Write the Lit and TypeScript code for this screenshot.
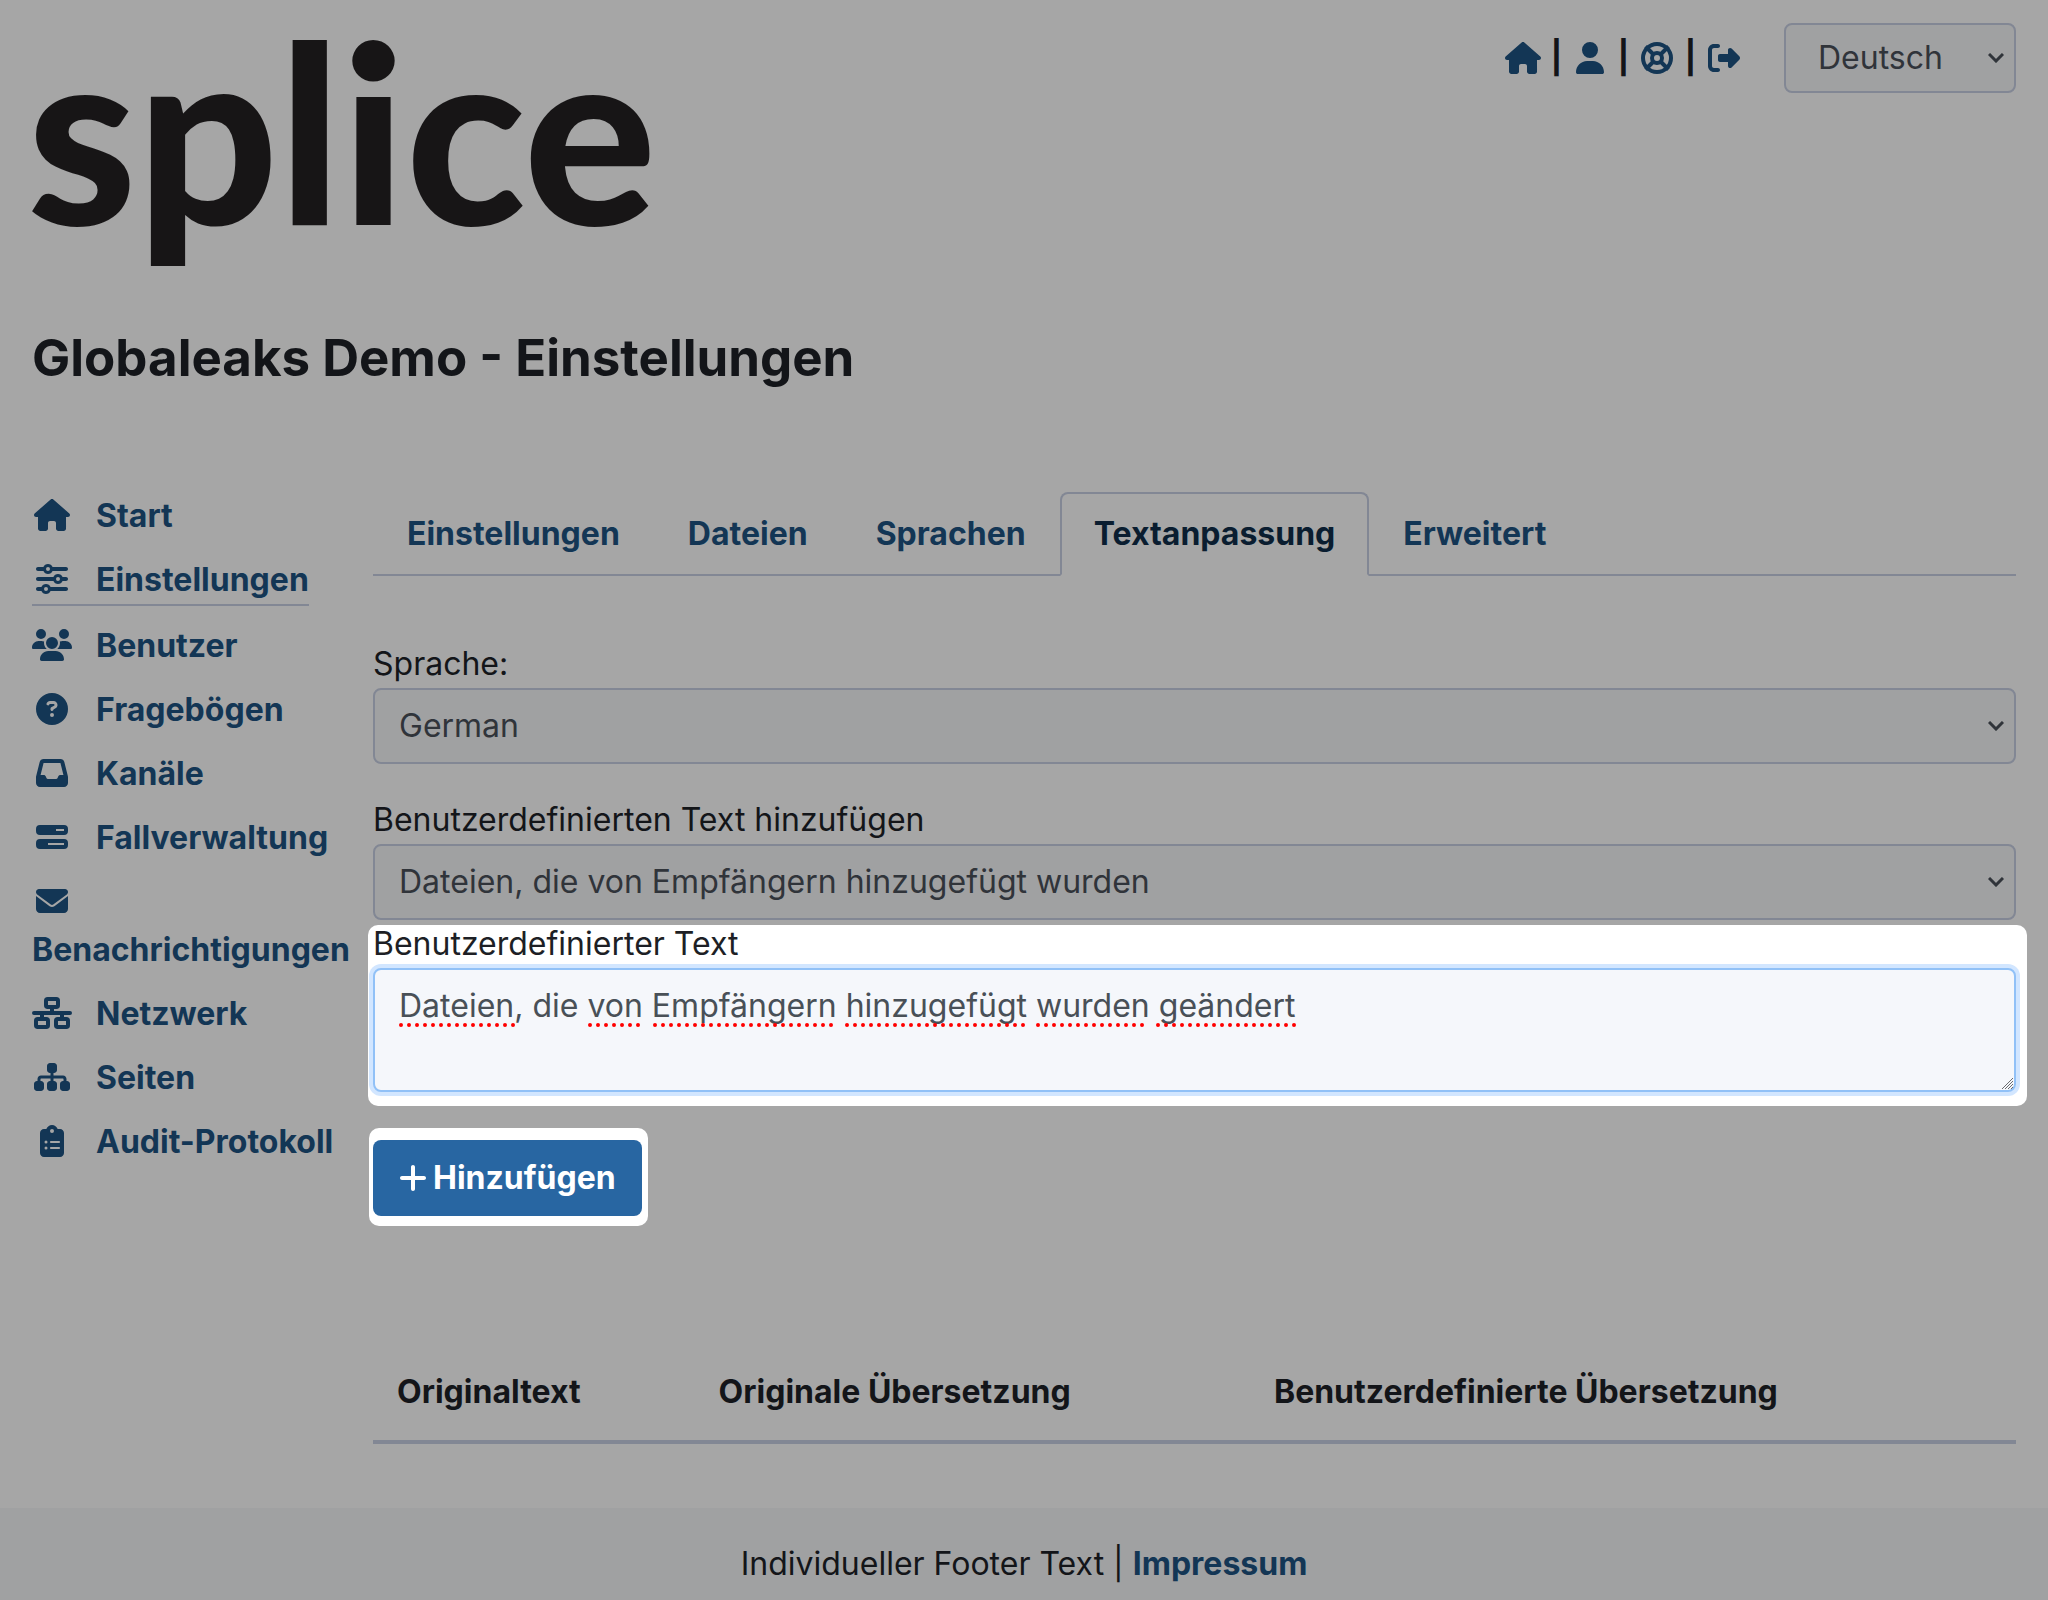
import { LitElement, html, css, svg } from "lit";
import { customElement } from "lit/decorators.js";
import { classMap } from "lit/directives/class-map.js";

interface Icon {
  w: number;
  d: string;
}

const box = (x: number, y: number, w: number, h: number, r: number) =>
  `M${x + r} ${y}h${w - 2 * r}a${r} ${r} 0 0 1 ${r} ${r}v${h - 2 * r}a${r} ${r} 0 0 1 -${r} ${r}h-${w - 2 * r}a${r} ${r} 0 0 1 -${r} -${r}v-${h - 2 * r}a${r} ${r} 0 0 1 ${r} -${r}z`;
const hole = (x: number, y: number, w: number, h: number) => `M${x} ${y}v${h}h${w}v-${h}z`;

const icons: Record<string, Icon> = {
  home: { w: 576, d: "M575.8 255.5c0 18-15 32.1-32 32.1l-32 0 .7 160.2c0 2.7-.2 5.4-.5 8.1l0 16.2c0 22.1-17.9 40-40 40l-16 0c-1.1 0-2.2 0-3.3-.1c-1.4 .1-2.8 .1-4.2 .1L416 512l-24 0c-22.1 0-40-17.9-40-40l0-24 0-64c0-17.7-14.3-32-32-32l-64 0c-17.7 0-32 14.3-32 32l0 64 0 24c0 22.1-17.9 40-40 40l-24 0-31.9 0c-1.5 0-3-.1-4.5-.2c-1.2 .1-2.4 .2-3.6 .2l-16 0c-22.1 0-40-17.9-40-40l0-112c0-.9 0-1.9 .1-2.8l0-69.7-32 0c-18 0-32-14-32-32.1c0-9 3-17 10-24L266.4 8c7-7 15-8 22-8s15 2 21 7L564.8 231.5c8 7 12 15 11 24z" },
  user: { w: 448, d: "M224 256A128 128 0 1 0 224 0a128 128 0 1 0 0 256zm-45.7 48C79.8 304 0 383.8 0 482.3C0 498.7 13.3 512 29.7 512l388.6 0c16.4 0 29.7-13.3 29.7-29.7C448 383.8 368.2 304 269.7 304l-91.4 0z" },
  exit: { w: 512, d: "M377.9 105.9L500.7 228.7c7.2 7.2 11.3 17.1 11.3 27.3s-4.1 20.1-11.3 27.3L377.9 406.1c-6.4 6.4-15 9.900-24 9.900c-18.700 0-33.900-15.200-33.900-33.900l0-62.100-128 0c-17.700 0-32-14.300-32-32l0-64c0-17.700 14.300-32 32-32l128 0 0-62.100c0-18.700 15.200-33.900 33.900-33.900c9 0 17.600 3.600 24 9.900zM160 96L96 96c-17.700 0-32 14.300-32 32l0 256c0 17.700 14.300 32 32 32l64 0c17.700 0 32 14.300 32 32s-14.300 32-32 32l-64 0c-53 0-96-43-96-96L0 128C0 75 43 32 96 32l64 0c17.700 0 32 14.300 32 32s-14.300 32-32 32z" },
  sliders: { w: 512, d: "M0 416c0 17.700 14.300 32 32 32l54.700 0c12.300 28.300 40.500 48 73.300 48s61-19.700 73.300-48L480 448c17.700 0 32-14.300 32-32s-14.300-32-32-32l-246.700 0c-12.300-28.300-40.500-48-73.300-48s-61 19.700-73.300 48L32 384c-17.700 0-32 14.300-32 32zm128 0a32 32 0 1 1 64 0 32 32 0 1 1 -64 0zM320 256a32 32 0 1 1 64 0 32 32 0 1 1 -64 0zm32-80c-32.800 0-61 19.700-73.300 48L32 224c-17.700 0-32 14.300-32 32s14.300 32 32 32l246.700 0c12.300 28.300 40.500 48 73.300 48s61-19.700 73.300-48l54.700 0c17.700 0 32-14.300 32-32s-14.300-32-32-32l-54.700 0c-12.300-28.300-40.500-48-73.300-48zM192 128a32 32 0 1 1 0-64 32 32 0 1 1 0 64zm73.300-64C253 35.700 224.800 16 192 16s-61 19.700-73.300 48L32 64C14.300 64 0 78.300 0 96s14.300 32 32 32l86.700 0c12.300 28.300 40.500 48 73.300 48s61-19.700 73.300-48L480 128c17.700 0 32-14.300 32-32s-14.300-32-32-32L265.300 64z" },
  users: { w: 640, d: "M144 0a80 80 0 1 1 0 160A80 80 0 1 1 144 0zM512 0a80 80 0 1 1 0 160A80 80 0 1 1 512 0zM0 298.700C0 239.800 47.800 192 106.700 192l42.700 0c15.900 0 31 3.500 44.600 9.700c-1.300 7.200-1.900 14.700-1.900 22.300c0 38.200 16.800 72.500 43.300 96c-.2 0-.4 0-.7 0L21.300 320C9.600 320 0 310.400 0 298.700zM405.300 320c-.2 0-.4 0-.7 0c26.600-23.500 43.300-57.800 43.300-96c0-7.600-.7-15-1.900-22.300c13.600-6.300 28.700-9.700 44.600-9.700l42.700 0C592.200 192 640 239.800 640 298.700c0 11.800-9.600 21.300-21.300 21.300l-213.300 0zM224 224a96 96 0 1 1 192 0 96 96 0 1 1 -192 0zM128 485.300C128 411.700 187.700 352 261.300 352l117.300 0C452.300 352 512 411.700 512 485.300c0 14.700-11.900 26.700-26.700 26.700l-330.700 0c-14.700 0-26.700-11.900-26.700-26.700z" },
  question: { w: 512, d: "M256 512A256 256 0 1 0 256 0a256 256 0 1 0 0 512zM169.800 165.300c7.900-22.300 29.100-37.300 52.800-37.300l58.300 0c34.900 0 63.100 28.300 63.100 63.100c0 22.600-12.100 43.500-31.700 54.800L280 264.400c-.2 13-10.900 23.600-24 23.600c-13.300 0-24-10.700-24-24l0-13.500c0-8.600 4.600-16.500 12.100-20.800l44.300-25.400c4.700-2.700 7.600-7.700 7.600-13.100c0-8.400-6.800-15.100-15.100-15.100l-58.300 0c-3.400 0-6.400 2.100-7.500 5.300l-.4 1.200c-4.400 12.500-18.200 19-30.600 14.600s-19-18.200-14.600-30.600l.4-1.200zM224 352a32 32 0 1 1 64 0 32 32 0 1 1 -64 0z" },
  inbox: { w: 512, d: "M121 32C91.600 32 66 52 58.900 80.500L1.900 308.400C.6 313.500 0 318.700 0 323.900L0 416c0 35.300 28.700 64 64 64l384 0c35.300 0 64-28.700 64-64l0-92.100c0-5.200-.6-10.400-1.900-15.500l-57-227.900C446 52 420.400 32 391 32L121 32zm0 64l270 0 48 192-51.200 0c-12.100 0-23.200 6.800-28.600 17.700l-14.300 28.600c-5.400 10.800-16.500 17.700-28.600 17.700l-120.400 0c-12.100 0-23.200-6.800-28.600-17.700l-14.300-28.600c-5.400-10.800-16.500-17.700-28.600-17.700L73 288 121 96z" },
  bars: { w: 512, d: box(0, 64, 512, 160, 64) + hole(320, 128, 128, 32) + box(0, 288, 512, 160, 64) + hole(192, 352, 256, 32) },
  mail: { w: 512, d: "M48 64C21.500 64 0 85.500 0 112c0 15.100 7.100 29.300 19.200 38.400L236.800 313.600c11.400 8.500 27 8.500 38.400 0L492.800 150.400c12.100-9.100 19.200-23.300 19.200-38.400c0-26.500-21.500-48-48-48L48 64zM0 176L0 384c0 35.300 28.700 64 64 64l384 0c35.300 0 64-28.700 64-64l0-208L294.400 339.200c-22.800 17.100-54 17.100-76.800 0L0 176z" },
  network: { w: 640, d: box(192, 0, 256, 192, 60) + hole(256, 64, 128, 64) + "M288 192h64v32h256a32 32 0 0 1 0 64h-96v32h-64v-32h-256v32h-64v-32h-96a32 32 0 0 1 0 -64h256z" + box(32, 320, 256, 192, 60) + hole(96, 384, 128, 64) + box(352, 320, 256, 192, 60) + hole(416, 384, 128, 64) },
  sitemap: { w: 576, d: "M208 80c0-26.500 21.500-48 48-48l64 0c26.500 0 48 21.500 48 48l0 64c0 26.500-21.500 48-48 48l-8 0 0 40 152 0c30.900 0 56 25.100 56 56l0 32 8 0c26.500 0 48 21.500 48 48l0 64c0 26.500-21.500 48-48 48l-64 0c-26.500 0-48-21.500-48-48l0-64c0-26.500 21.500-48 48-48l8 0 0-32c0-4.400-3.600-8-8-8l-152 0 0 40 8 0c26.500 0 48 21.500 48 48l0 64c0 26.500-21.500 48-48 48l-64 0c-26.500 0-48-21.500-48-48l0-64c0-26.500 21.500-48 48-48l8 0 0-40-152 0c-4.400 0-8 3.600-8 8l0 32 8 0c26.500 0 48 21.500 48 48l0 64c0 26.500-21.500 48-48 48l-64 0c-26.500 0-48-21.500-48-48l0-64c0-26.500 21.500-48 48-48l8 0 0-32c0-30.900 25.100-56 56-56l152 0 0-40-8 0c-26.500 0-48-21.500-48-48l0-64z" },
  clipboard: { w: 384, d: "M192 0c-41.800 0-77.400 26.700-90.500 64L64 64C28.700 64 0 92.700 0 128L0 448c0 35.300 28.700 64 64 64l256 0c35.300 0 64-28.700 64-64l0-320c0-35.300-28.700-64-64-64l-37.500 0C269.400 26.700 233.800 0 192 0zm0 64a32 32 0 1 1 0 64 32 32 0 1 1 0-64zM72 272a24 24 0 1 1 48 0 24 24 0 1 1 -48 0zm104-16l128 0c8.800 0 16 7.200 16 16s-7.200 16-16 16l-128 0c-8.800 0-16-7.200-16-16s7.200-16 16-16zM72 368a24 24 0 1 1 48 0 24 24 0 1 1 -48 0zm88 0c0-8.800 7.200-16 16-16l128 0c8.800 0 16 7.200 16 16s-7.200 16-16 16l-128 0c-8.800 0-16-7.200-16-16z" },
  plus: { w: 448, d: "M256 80c0-17.700-14.300-32-32-32s-32 14.300-32 32l0 144L48 224c-17.700 0-32 14.300-32 32s14.300 32 32 32l144 0 0 144c0 17.700 14.300 32 32 32s32-14.300 32-32l0-144 144 0c17.700 0 32-14.300 32-32s-14.300-32-32-32l-144 0 0-144z" },
};

const icon = (name: string) => {
  const { w, d } = icons[name];
  return html`<svg class="icon" width=${w / 16} height="32" viewBox="0 0 ${w} 512" aria-hidden="true">
    ${svg`<path fill-rule="evenodd" d=${d}></path>`}
  </svg>`;
};

const lifeRing = html`<svg class="icon" width="32" height="32" viewBox="0 0 512 512" aria-hidden="true">
  <g class="ring">
    <circle cx="256" cy="256" r="224"></circle>
    <circle cx="256" cy="256" r="80"></circle>
    <path d="M72 72l128 128M440 72l-128 128M72 440l128-128M440 440l-128-128"></path>
  </g>
</svg>`;

const chevron = html`<svg class="chevron" width="16" height="10" viewBox="0 0 16 10" aria-hidden="true">
  <path d="M1 1l7 7 7-7"></path>
</svg>`;

const menu = [
  { icon: "home", label: "Start" },
  { icon: "sliders", label: "Einstellungen", active: true },
  { icon: "users", label: "Benutzer" },
  { icon: "question", label: "Fragebögen" },
  { icon: "inbox", label: "Kanäle" },
  { icon: "bars", label: "Fallverwaltung" },
  { icon: "mail", label: "Benachrichtigungen" },
  { icon: "network", label: "Netzwerk" },
  { icon: "sitemap", label: "Seiten" },
  { icon: "clipboard", label: "Audit-Protokoll" },
];

const tabs = ["Einstellungen", "Dateien", "Sprachen", "Textanpassung", "Erweitert"];

/* Start and end of each word that the spelling check marks */
const marks = [[0, 115], [189, 243], [254, 436], [446, 626], [637, 747], [757, 896]];

@customElement("app-root")
export class AppRoot extends LitElement {
  static styles = css`
    :host {
      display: block;
      font: 400 32px/48px Inter, "Liberation Sans", sans-serif;
      color: #131519;
      background: #a6a6a6;
    }
    * { box-sizing: border-box; }
    a { color: #133655; font-weight: 700; text-decoration: none; }
    .page { min-height: 100vh; display: flex; flex-direction: column; }
    .header { display: flex; justify-content: space-between; align-items: flex-start; padding: 23px 32px 0; }
    .logo { display: block; width: 660px; height: 262px; }
    .logo text { font: 900 248px Lato, sans-serif; fill: #171516; }
    .tools { display: flex; align-items: center; gap: 40px; }
    .links { display: flex; align-items: center; font-weight: 700; }
    .links a { display: flex; justify-content: center; width: 40px; }
    .bar { width: 27px; text-align: center; }
    .icon { fill: currentColor; flex: none; }
    .ring { fill: none; stroke: currentColor; stroke-width: 64; }
    .title { margin: 41px 32px 0; font-size: 51px; line-height: 64px; font-weight: 700; }
    .body { display: grid; grid-template-columns: 320px minmax(0, 1fr); column-gap: 21px; padding: 0 32px; margin-top: 102px; }
    .menu { list-style: none; margin: 0; padding: 0; display: flex; flex-direction: column; align-items: flex-start; gap: 16px; }
    .menu a { display: block; }
    .menu .current { border-bottom: 2px solid #828794; }
    .menu .slot { display: inline-block; width: 40px; margin-right: 24px; text-align: center; }
    .menu .icon { vertical-align: -4px; }
    .tabs { display: flex; border-bottom: 2px solid #828794; }
    .tab { padding: 16px 32px; border: 2px solid transparent; border-radius: 8px 8px 0 0; margin-bottom: -2px; }
    .tab.current { color: #0a1d30; border-color: #828794 #828794 #a6a6a6; background: #a6a6a6; }
    .form { display: flex; flex-direction: column; padding-top: 64px; }
    .label { display: block; }
    .field + .field { margin-top: 32px; }
    .picker { display: grid; align-items: center; }
    .picker > * { grid-area: 1 / 1; }
    .control {
      appearance: none; display: block; width: 100%; margin: 0; font: inherit;
      color: #30343a; background: #a0a1a2; border: 2px solid #828794; border-radius: 8px;
      padding: 12px 24px; outline: none;
    }
    .picker .control { height: 76px; }
    .tools .picker { width: 232px; }
    .tools .control { height: 70px; padding: 0 32px; }
    .chevron { justify-self: end; margin-right: 12px; fill: none; stroke: #30343a; stroke-width: 3; pointer-events: none; }
    .spot { background: #fff; border-radius: 10px; }
    .editor { margin: 5px -11px 0 -5px; padding: 0 11px 14px 5px; color: #1d1f25; }
    .editor .label { line-height: 38px; padding-bottom: 5px; }
    .area { position: relative; }
    .area .control {
      height: 124px; resize: vertical; color: #495057; background: #f5f7fb;
      border-color: #91c1f7; box-shadow: 0 0 0 4px #d2e6ff;
    }
    .area .control::-webkit-resizer { background: transparent; }
    .marks { position: absolute; left: 26px; top: 54px; pointer-events: none; }
    .marks path { stroke: #f00; stroke-width: 4; stroke-linecap: round; stroke-dasharray: 0 8; }
    .grip { position: absolute; right: 3px; bottom: 3px; pointer-events: none; }
    .grip path { fill: none; stroke: #6b6d70; stroke-width: 1; }
    .action { align-self: flex-start; margin: 22px 0 0 -4px; padding: 12px 6px 10px 4px; }
    .add {
      display: flex; align-items: center; gap: 6px; height: 76px; padding: 0 26px; border: 0; border-radius: 8px;
      font: inherit; font-weight: 700; color: #fff; background: #2866a2;
    }
    .texts { width: 100%; margin-top: 118px; border-collapse: collapse; text-align: left; }
    .texts th { padding: 24px; border-bottom: 4px solid #828794; font-weight: 700; }
    .footer { margin-top: auto; padding: 32px 32px 12px; text-align: center; background: #a0a1a2; }
  `;

  render() {
    return html`
      <div class="page">
        <header class="header">
          <svg class="logo" viewBox="0 0 660 262" role="img" aria-label="splice">
            <text x="-5" y="202">splice</text>
          </svg>
          <div class="tools">
            <nav class="links">
              <a href="#start" aria-label="Start">${icon("home")}</a>
              <span class="bar">|</span>
              <a href="#konto" aria-label="Konto">${icon("user")}</a>
              <span class="bar">|</span>
              <a href="#hilfe" aria-label="Hilfe">${lifeRing}</a>
              <span class="bar">|</span>
              <a href="#abmelden" aria-label="Abmelden">${icon("exit")}</a>
            </nav>
            <div class="picker">
              <select class="control" aria-label="Sprachauswahl"><option>Deutsch</option></select>
              ${chevron}
            </div>
          </div>
        </header>
        <h1 class="title">Globaleaks Demo - Einstellungen</h1>
        <div class="body">
          <nav>
            <ul class="menu">
              ${menu.map((m) => html`<li>
                <a href="#" class=${classMap({ current: !!m.active })}><span class="slot">${icon(m.icon)}</span><wbr>${m.label}</a>
              </li>`)}
            </ul>
          </nav>
          <main>
            <nav class="tabs">
              ${tabs.map((t) => html`<a href="#" class=${classMap({ tab: true, current: t === "Textanpassung" })}>${t}</a>`)}
            </nav>
            <div class="form">
              <div class="field">
                <label class="label" for="language">Sprache:</label>
                <div class="picker">
                  <select class="control" id="language"><option>German</option></select>
                  ${chevron}
                </div>
              </div>
              <div class="field">
                <label class="label" for="original">Benutzerdefinierten Text hinzufügen</label>
                <div class="picker">
                  <select class="control" id="original"><option>Dateien, die von Empfängern hinzugefügt wurden</option></select>
                  ${chevron}
                </div>
              </div>
              <div class="editor spot">
                <label class="label" for="custom">Benutzerdefinierter Text</label>
                <div class="area">
                  <textarea class="control" id="custom" spellcheck="false" .value=${"Dateien, die von Empfängern hinzugefügt wurden geändert"}></textarea>
                  <svg class="marks" width="900" height="6" viewBox="0 0 900 6" aria-hidden="true">
                    ${marks.map(([a, b]) => svg`<path d="M${a + 2} 3H${b}"></path>`)}
                  </svg>
                  <svg class="grip" width="11" height="11" viewBox="0 0 11 11" aria-hidden="true">
                    <path d="M0 11L11 0M3 11L11 3M6 11L11 6M9 11L11 9"></path>
                  </svg>
                </div>
              </div>
              <div class="action spot">
                <button class="add" type="button">${icon("plus")}Hinzufügen</button>
              </div>
            </div>
            <table class="texts">
              <thead>
                <tr>
                  <th scope="col">Originaltext</th>
                  <th scope="col">Originale Übersetzung</th>
                  <th scope="col">Benutzerdefinierte Übersetzung</th>
                </tr>
              </thead>
            </table>
          </main>
        </div>
        <footer class="footer">Individueller Footer Text | <a href="#impressum">Impressum</a></footer>
      </div>
    `;
  }
}
